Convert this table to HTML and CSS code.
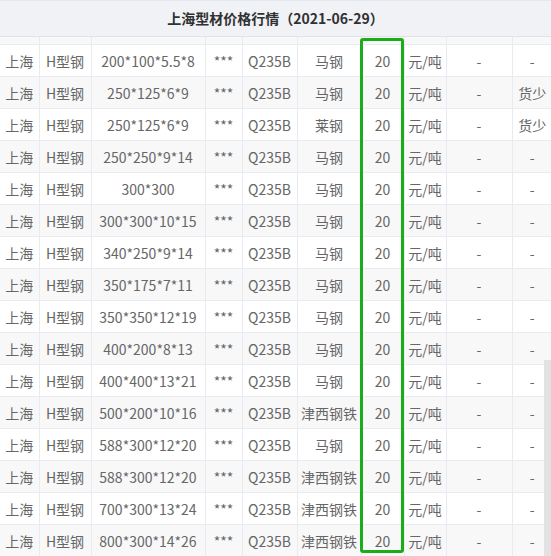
FILE: index.html
```html
<!DOCTYPE html>
<html lang="zh">
<head>
<meta charset="utf-8">
<link rel="stylesheet" href="styles.css">
</head>
<body>
<div class="page">
  <div class="title">上海型材价格行情（2021-06-29）</div>
  <table class="grid">
    <colgroup>
      <col class="c1"><col class="c2"><col class="c3"><col class="c4"><col class="c5">
      <col class="c6"><col class="c7"><col class="c8"><col class="c9"><col class="c10">
    </colgroup>
    <tbody>
      <tr class="stub"><td></td><td></td><td></td><td></td><td></td><td></td><td></td><td></td><td></td><td></td></tr>
      <tr><td>上海</td><td>H型钢</td><td>200*100*5.5*8</td><td>***</td><td>Q235B</td><td>马钢</td><td>20</td><td>元/吨</td><td>-</td><td>-</td></tr>
      <tr><td>上海</td><td>H型钢</td><td>250*125*6*9</td><td>***</td><td>Q235B</td><td>马钢</td><td>20</td><td>元/吨</td><td>-</td><td>货少</td></tr>
      <tr><td>上海</td><td>H型钢</td><td>250*125*6*9</td><td>***</td><td>Q235B</td><td>莱钢</td><td>20</td><td>元/吨</td><td>-</td><td>货少</td></tr>
      <tr><td>上海</td><td>H型钢</td><td>250*250*9*14</td><td>***</td><td>Q235B</td><td>马钢</td><td>20</td><td>元/吨</td><td>-</td><td>-</td></tr>
      <tr><td>上海</td><td>H型钢</td><td>300*300</td><td>***</td><td>Q235B</td><td>马钢</td><td>20</td><td>元/吨</td><td>-</td><td>-</td></tr>
      <tr><td>上海</td><td>H型钢</td><td>300*300*10*15</td><td>***</td><td>Q235B</td><td>马钢</td><td>20</td><td>元/吨</td><td>-</td><td>-</td></tr>
      <tr><td>上海</td><td>H型钢</td><td>340*250*9*14</td><td>***</td><td>Q235B</td><td>马钢</td><td>20</td><td>元/吨</td><td>-</td><td>-</td></tr>
      <tr><td>上海</td><td>H型钢</td><td>350*175*7*11</td><td>***</td><td>Q235B</td><td>马钢</td><td>20</td><td>元/吨</td><td>-</td><td>-</td></tr>
      <tr><td>上海</td><td>H型钢</td><td>350*350*12*19</td><td>***</td><td>Q235B</td><td>马钢</td><td>20</td><td>元/吨</td><td>-</td><td>-</td></tr>
      <tr><td>上海</td><td>H型钢</td><td>400*200*8*13</td><td>***</td><td>Q235B</td><td>马钢</td><td>20</td><td>元/吨</td><td>-</td><td>-</td></tr>
      <tr><td>上海</td><td>H型钢</td><td>400*400*13*21</td><td>***</td><td>Q235B</td><td>马钢</td><td>20</td><td>元/吨</td><td>-</td><td>-</td></tr>
      <tr><td>上海</td><td>H型钢</td><td>500*200*10*16</td><td>***</td><td>Q235B</td><td>津西钢铁</td><td>20</td><td>元/吨</td><td>-</td><td>-</td></tr>
      <tr><td>上海</td><td>H型钢</td><td>588*300*12*20</td><td>***</td><td>Q235B</td><td>马钢</td><td>20</td><td>元/吨</td><td>-</td><td>-</td></tr>
      <tr><td>上海</td><td>H型钢</td><td>588*300*12*20</td><td>***</td><td>Q235B</td><td>津西钢铁</td><td>20</td><td>元/吨</td><td>-</td><td>-</td></tr>
      <tr><td>上海</td><td>H型钢</td><td>700*300*13*24</td><td>***</td><td>Q235B</td><td>津西钢铁</td><td>20</td><td>元/吨</td><td>-</td><td>-</td></tr>
      <tr><td>上海</td><td>H型钢</td><td>800*300*14*26</td><td>***</td><td>Q235B</td><td>津西钢铁</td><td>20</td><td>元/吨</td><td>-</td><td>-</td></tr>
    </tbody>
  </table>
  <div class="highlight"></div>
  <div class="scroll-thumb"></div>
</div>
</body>
</html>
```
FILE: styles.css
```css
html, body {
  margin: 0;
  padding: 0;
  background: #ffffff;
  overflow: hidden;
}
.page {
  position: relative;
  width: 551px;
  height: 556px;
  overflow: hidden;
  font-family: "Noto Sans CJK SC", sans-serif;
  color: #666666;
}
.title {
  box-sizing: border-box;
  height: 37px;
  line-height: 35px;
  text-align: center;
  font-size: 14px;
  font-weight: bold;
  color: #303133;
  background: #f0f2f5;
  border-top: 1px solid #e4e7ed;
  border-bottom: 1px solid #e0e3e8;
}
.grid {
  border-collapse: collapse;
  table-layout: fixed;
  width: 552px;
  font-size: 14px;
}
.c1 { width: 39px; }
.c2 { width: 52px; }
.c3 { width: 114px; }
.c4 { width: 37px; }
.c5 { width: 55px; }
.c6 { width: 64px; }
.c7 { width: 43px; }
.c8 { width: 42px; }
.c9 { width: 66px; }
.c10 { width: 40px; }
.grid td {
  height: 31px;
  padding: 0;
  text-align: center;
  white-space: nowrap;
  overflow: hidden;
  border-left: 1px solid #e8ecf1;
  border-bottom: 1px solid #e8ecf1;
}
.grid td:first-child {
  border-left: none;
}
.grid tr:nth-child(odd) td {
  background: #f8f8f9;
}
.grid tr:nth-child(even) td {
  background: #ffffff;
}
.grid tr.stub td {
  height: 7px;
}
.highlight {
  position: absolute;
  left: 360px;
  top: 38px;
  width: 44px;
  height: 515px;
  box-sizing: border-box;
  border: 3px solid #1aad19;
  border-radius: 3px;
}
.scroll-thumb {
  position: absolute;
  left: 544px;
  top: 360px;
  width: 7px;
  height: 196px;
  background: #e2e2e2;
}
```
